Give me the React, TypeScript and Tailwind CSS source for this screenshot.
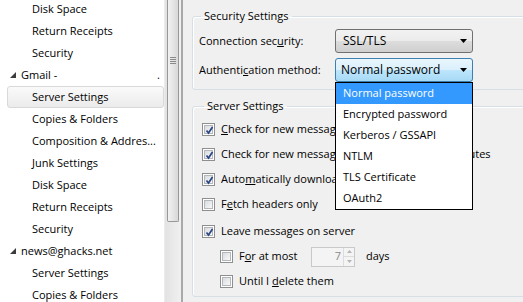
const tree = [
  { t: "Disk Space", l: 1 },
  { t: "Return Receipts", l: 1 },
  { t: "Security", l: 1 },
  { t: "Gmail -", l: 0, dot: true },
  { t: "Server Settings", l: 1, sel: true },
  { t: "Copies & Folders", l: 1 },
  { t: "Composition & Addres...", l: 1 },
  { t: "Junk Settings", l: 1 },
  { t: "Disk Space", l: 1 },
  { t: "Return Receipts", l: 1 },
  { t: "Security", l: 1 },
  { t: "news@ghacks.net", l: 0 },
  { t: "Server Settings", l: 1 },
  { t: "Copies & Folders", l: 1 },
];

const authOptions = [
  "Normal password",
  "Encrypted password",
  "Kerberos / GSSAPI",
  "NTLM",
  "TLS Certificate",
  "OAuth2",
];

function Expander() {
  return (
    <svg width="7" height="7" viewBox="0 0 7 7" className="shrink-0">
      <path d="M6 0V6H0Z" fill="#3c3c3c" />
    </svg>
  );
}

function Arrow() {
  return (
    <svg width="7" height="4" viewBox="0 0 7 4">
      <path d="M0 0H7L3.5 4Z" fill="#000" />
    </svg>
  );
}

function Check({ on }: { on?: boolean }) {
  return (
    <div className="w-[13px] h-[13px] shrink-0 border border-[#8e8f8f] bg-white p-[1px]">
      <div className="relative w-full h-full border border-[#b3b6ba] bg-gradient-to-br from-[#d9dbde] to-[#f9f9f9]">
        {on && (
          <svg width="11" height="11" viewBox="0 0 11 11" className="absolute -left-[1px] -top-[1px]">
            <path d="M2.5 5.5 L4.5 8 L8.5 2" fill="none" stroke="#2a4783" strokeWidth="1.7" />
          </svg>
        )}
      </div>
    </div>
  );
}

function Spin({ value }: { value: string }) {
  return (
    <div className="w-[44px] h-[20px] flex border border-[#c9c9c9] bg-[#f4f4f4]">
      <div className="flex-1 flex items-center justify-end pr-[2px] text-[#8a8a8a]">{value}</div>
      <div className="w-[11px] flex flex-col border-l border-[#dcdcdc]">
        <div className="flex-1 flex items-center justify-center border-b border-[#dcdcdc]">
          <svg width="5" height="3" viewBox="0 0 5 3"><path d="M0 3H5L2.5 0Z" fill="#b5b5b5" /></svg>
        </div>
        <div className="flex-1 flex items-center justify-center">
          <svg width="5" height="3" viewBox="0 0 5 3"><path d="M0 0H5L2.5 3Z" fill="#b5b5b5" /></svg>
        </div>
      </div>
    </div>
  );
}

export default function App() {
  return (
    <div className="w-[523px] h-[302px] overflow-hidden flex bg-[#f0f0f0] text-black text-[11px] font-['Open_Sans',sans-serif]">
      {/* account tree */}
      <div className="w-[164px] shrink-0 bg-white overflow-hidden">
        <div className="-mt-[2px]">
          {tree.map((n, i) =>
            n.sel ? (
              <div key={i} className="h-[22px] ml-[7px] pl-[24px] flex items-center rounded-[3px] border border-[#d9d9d9] bg-gradient-to-b from-[#fafafa] to-[#ebebeb]">
                {n.t}
              </div>
            ) : n.l === 0 ? (
              <div key={i} className="h-[22px] pl-[10px] pr-[4px] flex items-center">
                <Expander />
                <span className="ml-[4px]">{n.t}</span>
                {n.dot && <span className="ml-auto">.</span>}
              </div>
            ) : (
              <div key={i} className="h-[22px] pl-[32px] flex items-center whitespace-nowrap">
                {n.t}
              </div>
            )
          )}
        </div>
      </div>
      {/* scrollbar */}
      <div className="w-[17px] shrink-0 flex flex-col bg-gradient-to-r from-[#e3e3e3] to-[#f0f0f0] border-l border-[#ececec]">
        <div className="h-[222px] mx-[2px] pt-[57px] flex flex-col items-center gap-[1px] rounded-b-[2px] border border-t-0 border-[#989898] bg-gradient-to-r from-[#f2f2f2] to-[#d8d8d8]">
          <div className="w-[6px] h-[1px] bg-[#8a8a8a]" />
          <div className="w-[6px] h-[1px] bg-[#8a8a8a]" />
          <div className="w-[6px] h-[1px] bg-[#8a8a8a]" />
          <div className="w-[6px] h-[1px] bg-[#8a8a8a]" />
        </div>
      </div>
      <div className="w-[2px] shrink-0 bg-[#a9a9a9]" />

      {/* settings panel */}
      <div className="flex-1 pl-[9px] min-w-0">
        <fieldset className="w-[360px] mt-[8px] px-[6px] pb-[7px] border border-[#d5dfe5] rounded-[3px] shadow-[inset_1px_1px_0_#fff]">
          <legend className="ml-[2px] px-[3px] leading-[16px]">Security Settings</legend>
          <div className="flex items-center h-[24px] mt-[5px]">
            <span className="w-[136px]">
              Connection sec<u>u</u>rity:
            </span>
            <div className="w-[138px] h-[24px] flex items-center justify-between pl-[7px] pr-[5px] rounded-[3px] border border-[#707070] bg-[linear-gradient(#f2f2f2,#ebebeb_50%,#dddddd_50%,#cfcfcf)]">
              <span className="text-[12px]">SSL/TLS</span>
              <Arrow />
            </div>
          </div>
          <div className="flex items-center h-[24px] mt-[5px]">
            <span className="w-[136px]">
              Authenti<u>c</u>ation method:
            </span>
            <div className="relative w-[138px] h-[24px]">
              <div className="h-full flex items-center justify-between pl-[5px] pr-[5px] rounded-[3px] border border-[#3c7fb1] bg-[linear-gradient(#eaf6fd,#d9f0fc_50%,#bee6fd_50%,#a7d9f5)]">
                <span className="text-[12px]">Normal password</span>
                <Arrow />
              </div>
              <div className="absolute z-10 left-0 top-full w-[138px] border border-black bg-white">
                {authOptions.map((o, i) => (
                  <div key={o} className={`h-[21px] pl-[7px] flex items-center ${i === 0 ? "bg-[#3399ff] text-white" : ""}`}>
                    {o}
                  </div>
                ))}
              </div>
            </div>
          </div>
        </fieldset>

        <fieldset className="w-[360px] mt-[8px] h-[199px] px-[9px] border border-[#d5dfe5] rounded-[3px] shadow-[inset_1px_1px_0_#fff]">
          <legend className="ml-[2px] px-[3px] leading-[16px]">Server Settings</legend>
          <div className="mt-[3px] flex flex-col">
            <div className="h-[25px] flex items-center gap-[6px] whitespace-nowrap">
              <Check on />
              <span>
                <u>C</u>heck for new messages at startup
              </span>
            </div>
            <div className="h-[25px] flex items-center gap-[6px] whitespace-nowrap">
              <Check on />
              <span>Check for new messages every</span>
              <div className="ml-[11px]">
                <Spin value="10" />
              </div>
              <span className="ml-[4px]">minutes</span>
            </div>
            <div className="h-[25px] flex items-center gap-[6px] whitespace-nowrap">
              <Check on />
              <span>
                Auto<u>m</u>atically download new messages
              </span>
            </div>
            <div className="h-[25px] flex items-center gap-[6px] whitespace-nowrap">
              <Check />
              <span>
                F<u>e</u>tch headers only
              </span>
            </div>
            <div className="h-[25px] mt-[2px] flex items-center gap-[6px] whitespace-nowrap">
              <Check on />
              <span>
                Leave messa<u>g</u>es on server
              </span>
            </div>
            <div className="h-[25px] pl-[18px] flex items-center whitespace-nowrap">
              <Check />
              <span className="ml-[6px] w-[72px]">
                F<u>o</u>r at most
              </span>
              <Spin value="7" />
              <span className="ml-[11px]">days</span>
            </div>
            <div className="h-[24px] pl-[18px] flex items-center gap-[6px] whitespace-nowrap">
              <Check />
              <span>
                Until I <u>d</u>elete them
              </span>
            </div>
          </div>
        </fieldset>
      </div>
    </div>
  );
}
